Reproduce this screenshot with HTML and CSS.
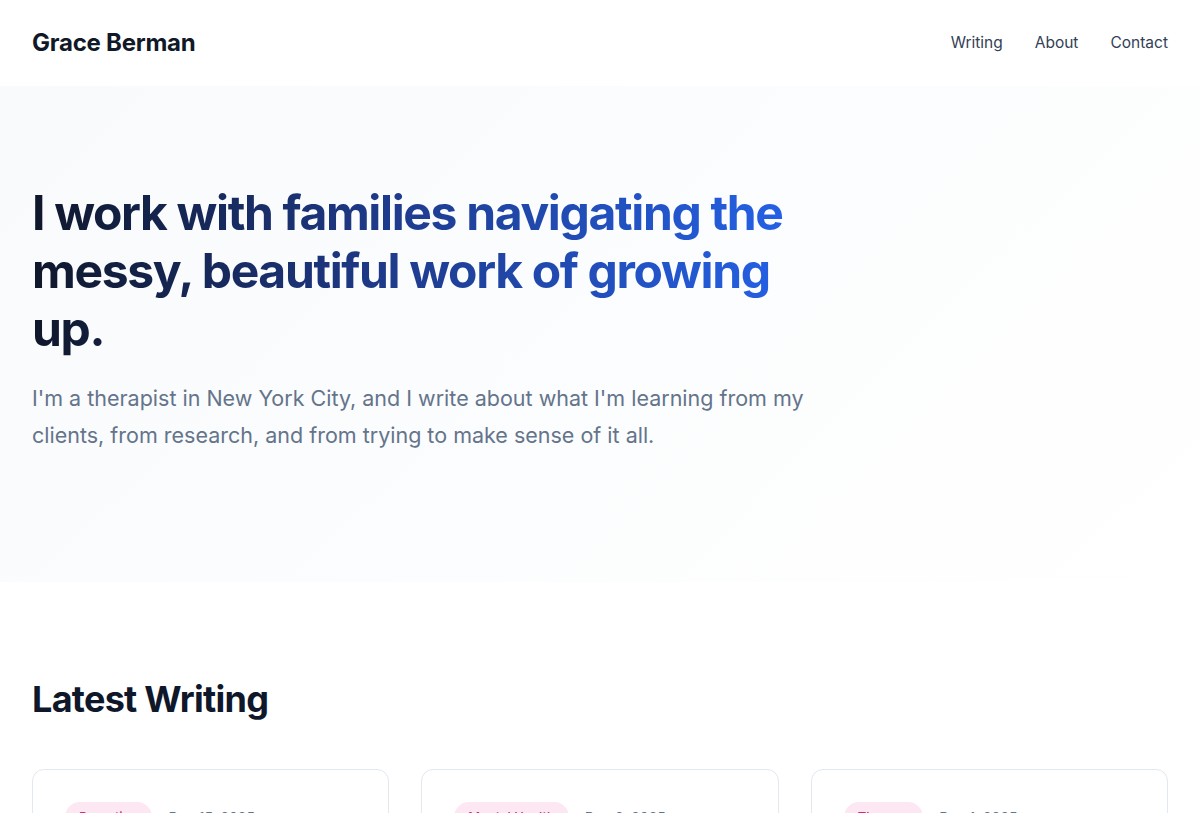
FILE: index.html
```html
<!DOCTYPE html>
<html lang="en">
<head>
  <meta charset="UTF-8">
  <title>Grace Berman</title>
  <link rel="stylesheet" href="styles.css">
</head>
<body>
  <header class="site-header">
    <a class="logo" href="#">Grace Berman</a>
    <nav class="nav">
      <a href="#">Writing</a>
      <a href="#">About</a>
      <a href="#">Contact</a>
    </nav>
  </header>

  <section class="hero">
    <div class="hero-inner">
      <h1 class="hero-title">I work with families navigating the messy, beautiful work of growing up.</h1>
      <p class="hero-text">I'm a therapist in New York City, and I write about what I'm learning from my clients, from research, and from trying to make sense of it all.</p>
    </div>
  </section>

  <section class="latest">
    <h2 class="section-title">Latest Writing</h2>
    <div class="posts">
      <article class="post-card">
        <div class="post-meta">
          <span class="tag">Parenting</span>
          <span class="date">Dec 15, 2025</span>
        </div>
      </article>
      <article class="post-card">
        <div class="post-meta">
          <span class="tag">Mental Health</span>
          <span class="date">Dec 8, 2025</span>
        </div>
      </article>
      <article class="post-card">
        <div class="post-meta">
          <span class="tag">Therapy</span>
          <span class="date">Dec 1, 2025</span>
        </div>
      </article>
    </div>
  </section>
</body>
</html>
```

FILE: styles.css
```css
* {
  box-sizing: border-box;
}

body {
  margin: 0;
  font-family: Inter, "Noto Sans", sans-serif;
  color: #0f172a;
  background: #fff;
}

a {
  text-decoration: none;
  color: inherit;
}

.site-header {
  display: flex;
  align-items: center;
  justify-content: space-between;
  height: 86px;
  padding: 0 32px 2px;
  background: #fff;
}

.logo {
  font-size: 24px;
  font-weight: 700;
  letter-spacing: -0.01em;
  color: #111827;
}

.nav {
  display: flex;
  gap: 32px;
}

.nav a {
  font-size: 15.5px;
  color: #334155;
}

.hero {
  background: linear-gradient(135deg, #f8fafc 0%, #ffffff 100%);
  padding: 98px 32px 128px;
}

.hero-inner {
  max-width: 800px;
}

.hero-title {
  margin: 0 0 22px;
  font-size: 48px;
  line-height: 58px;
  font-weight: 700;
  letter-spacing: -0.028em;
  background: linear-gradient(90deg, #0f172a 0%, #1e3a8a 45%, #2563eb 100%);
  -webkit-background-clip: text;
  background-clip: text;
  color: transparent;
  max-width: 780px;
}

.hero-text {
  margin: 0;
  font-size: 21.5px;
  line-height: 37px;
  color: #64748b;
}

.latest {
  padding: 96px 32px;
}

.section-title {
  margin: 0 0 48px;
  font-size: 36px;
  line-height: 43px;
  font-weight: 700;
  letter-spacing: -0.02em;
  color: #0f172a;
}

.posts {
  display: grid;
  grid-template-columns: repeat(3, 1fr);
  gap: 32px;
}

.post-card {
  border: 1px solid #e2e8f0;
  border-radius: 12px;
  padding: 32px;
  min-height: 260px;
  background: #fff;
}

.post-meta {
  display: flex;
  align-items: center;
  gap: 16px;
}

.tag {
  background: #fce7f3;
  color: #db2777;
  font-size: 13px;
  font-weight: 500;
  padding: 7px 14px;
  border-radius: 999px;
}

.date {
  font-size: 14px;
  color: #64748b;
}
```
